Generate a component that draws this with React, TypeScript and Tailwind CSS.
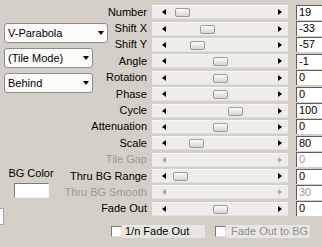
type Row = {
  label: string;
  value: string;
  thumb: number | null;
  disabled?: boolean;
};

const rows: Row[] = [
  { label: 'Number', value: '19', thumb: 23 },
  { label: 'Shift X', value: '-33', thumb: 48 },
  { label: 'Shift Y', value: '-57', thumb: 38 },
  { label: 'Angle', value: '-1', thumb: 61 },
  { label: 'Rotation', value: '0', thumb: 61 },
  { label: 'Phase', value: '0', thumb: 61 },
  { label: 'Cycle', value: '100', thumb: 76 },
  { label: 'Attenuation', value: '0', thumb: 61 },
  { label: 'Scale', value: '80', thumb: 37 },
  { label: 'Tile Gap', value: '0', thumb: null, disabled: true },
  { label: 'Thru BG Range', value: '0', thumb: 21 },
  { label: 'Thru BG Smooth', value: '30', thumb: null, disabled: true },
  { label: 'Fade Out', value: '0', thumb: 61 },
];

function Combo({ text, width }: { text: string; width: string }) {
  return (
    <div
      className={`${width} h-[20px] rounded-[3px] border border-[#8e8e8a] bg-[#fbfbf8] flex items-center justify-between pl-[3px] pr-[3px]`}
    >
      <span>{text}</span>
      <span className="w-0 h-0 border-x-[3.5px] border-x-transparent border-t-[4px] border-t-black" />
    </div>
  );
}

function Slider({ thumb, disabled }: { thumb: number | null; disabled?: boolean }) {
  const arrow = disabled ? 'border-r-[#a8a8a4]' : 'border-r-black';
  const arrowR = disabled ? 'border-l-[#a8a8a4]' : 'border-l-black';
  return (
    <div className="relative w-[136px] h-[14px] bg-[#eeede9] border-t border-t-[#f7f7f4] border-b border-b-[#e2e0da] flex items-center justify-between pl-[10px] pr-[6px]">
      <span className={`w-0 h-0 border-y-[3.5px] border-y-transparent border-r-[4px] ${arrow}`} />
      {thumb !== null && (
        <span
          className="absolute top-[2px] w-[15px] h-[9px] rounded-[2px] border border-[#9c9c98] bg-gradient-to-b from-[#fdfdfc] to-[#d6d5d0]"
          style={{ left: thumb }}
        />
      )}
      <span className={`w-0 h-0 border-y-[3.5px] border-y-transparent border-l-[4px] ${arrowR}`} />
    </div>
  );
}

export default function App() {
  return (
    <div className="w-[322px] h-[247px] overflow-hidden bg-[#d4d0c8] flex text-[11px] leading-[13px] text-black font-['Liberation_Sans',Arial,sans-serif]">
      <div className="w-[62px] shrink-0 flex flex-col items-start">
        <div className="pt-[23px] pl-[4px] flex flex-col gap-[5px]">
          <Combo text="V-Parabola" width="w-[104px]" />
          <Combo text="(Tile Mode)" width="w-[89px]" />
          <Combo text="Behind" width="w-[89px]" />
        </div>
        <div className="mt-[74px] w-[62px] flex flex-col items-center">
          <span>BG Color</span>
          <div className="mt-[3px] w-[35px] h-[15px] bg-white border-t border-l border-[#7c7c7c] border-b border-b-[#f4f4f2] border-r border-r-[#f4f4f2]" />
        </div>
        <div className="mt-[10px] -ml-[20px] w-[24px] h-[17px] bg-white border border-[#a9a8a3]" />
      </div>

      <div className="flex flex-col pt-[4px]">
        {rows.map((r) => (
          <div key={r.label} className="h-[16.4px] flex items-center">
            <span className={`w-[85px] text-right whitespace-nowrap ${r.disabled ? 'text-[#9a9994]' : ''}`}>
              {r.label}
            </span>
            <div className="ml-[5px]">
              <Slider thumb={r.thumb} disabled={r.disabled} />
            </div>
            <div
              className={`ml-[8px] w-[40px] h-[15px] bg-white border-t border-l border-[#5e5e5e] pl-[2px] ${r.disabled ? 'text-[#9a9994]' : ''}`}
            >
              {r.value}
            </div>
          </div>
        ))}

        <div className="mt-[8px] pl-[49px] flex items-center">
          <span className="w-[11px] h-[11px] bg-white border border-t-[#7c7c7c] border-l-[#7c7c7c] border-b-[#dcdcd8] border-r-[#dcdcd8]" />
          <span className="w-[83px] h-[13px] bg-[#e8e7e2] pl-[3px]">1/n Fade Out</span>
          <span className="ml-[10px] w-[11px] h-[11px] bg-white border border-t-[#7c7c7c] border-l-[#7c7c7c] border-b-[#dcdcd8] border-r-[#dcdcd8]" />
          <span className="w-[84px] h-[13px] bg-[#e8e7e2] pl-[5px] text-[#8f8e89]">Fade Out to BG</span>
        </div>
      </div>
    </div>
  );
}
